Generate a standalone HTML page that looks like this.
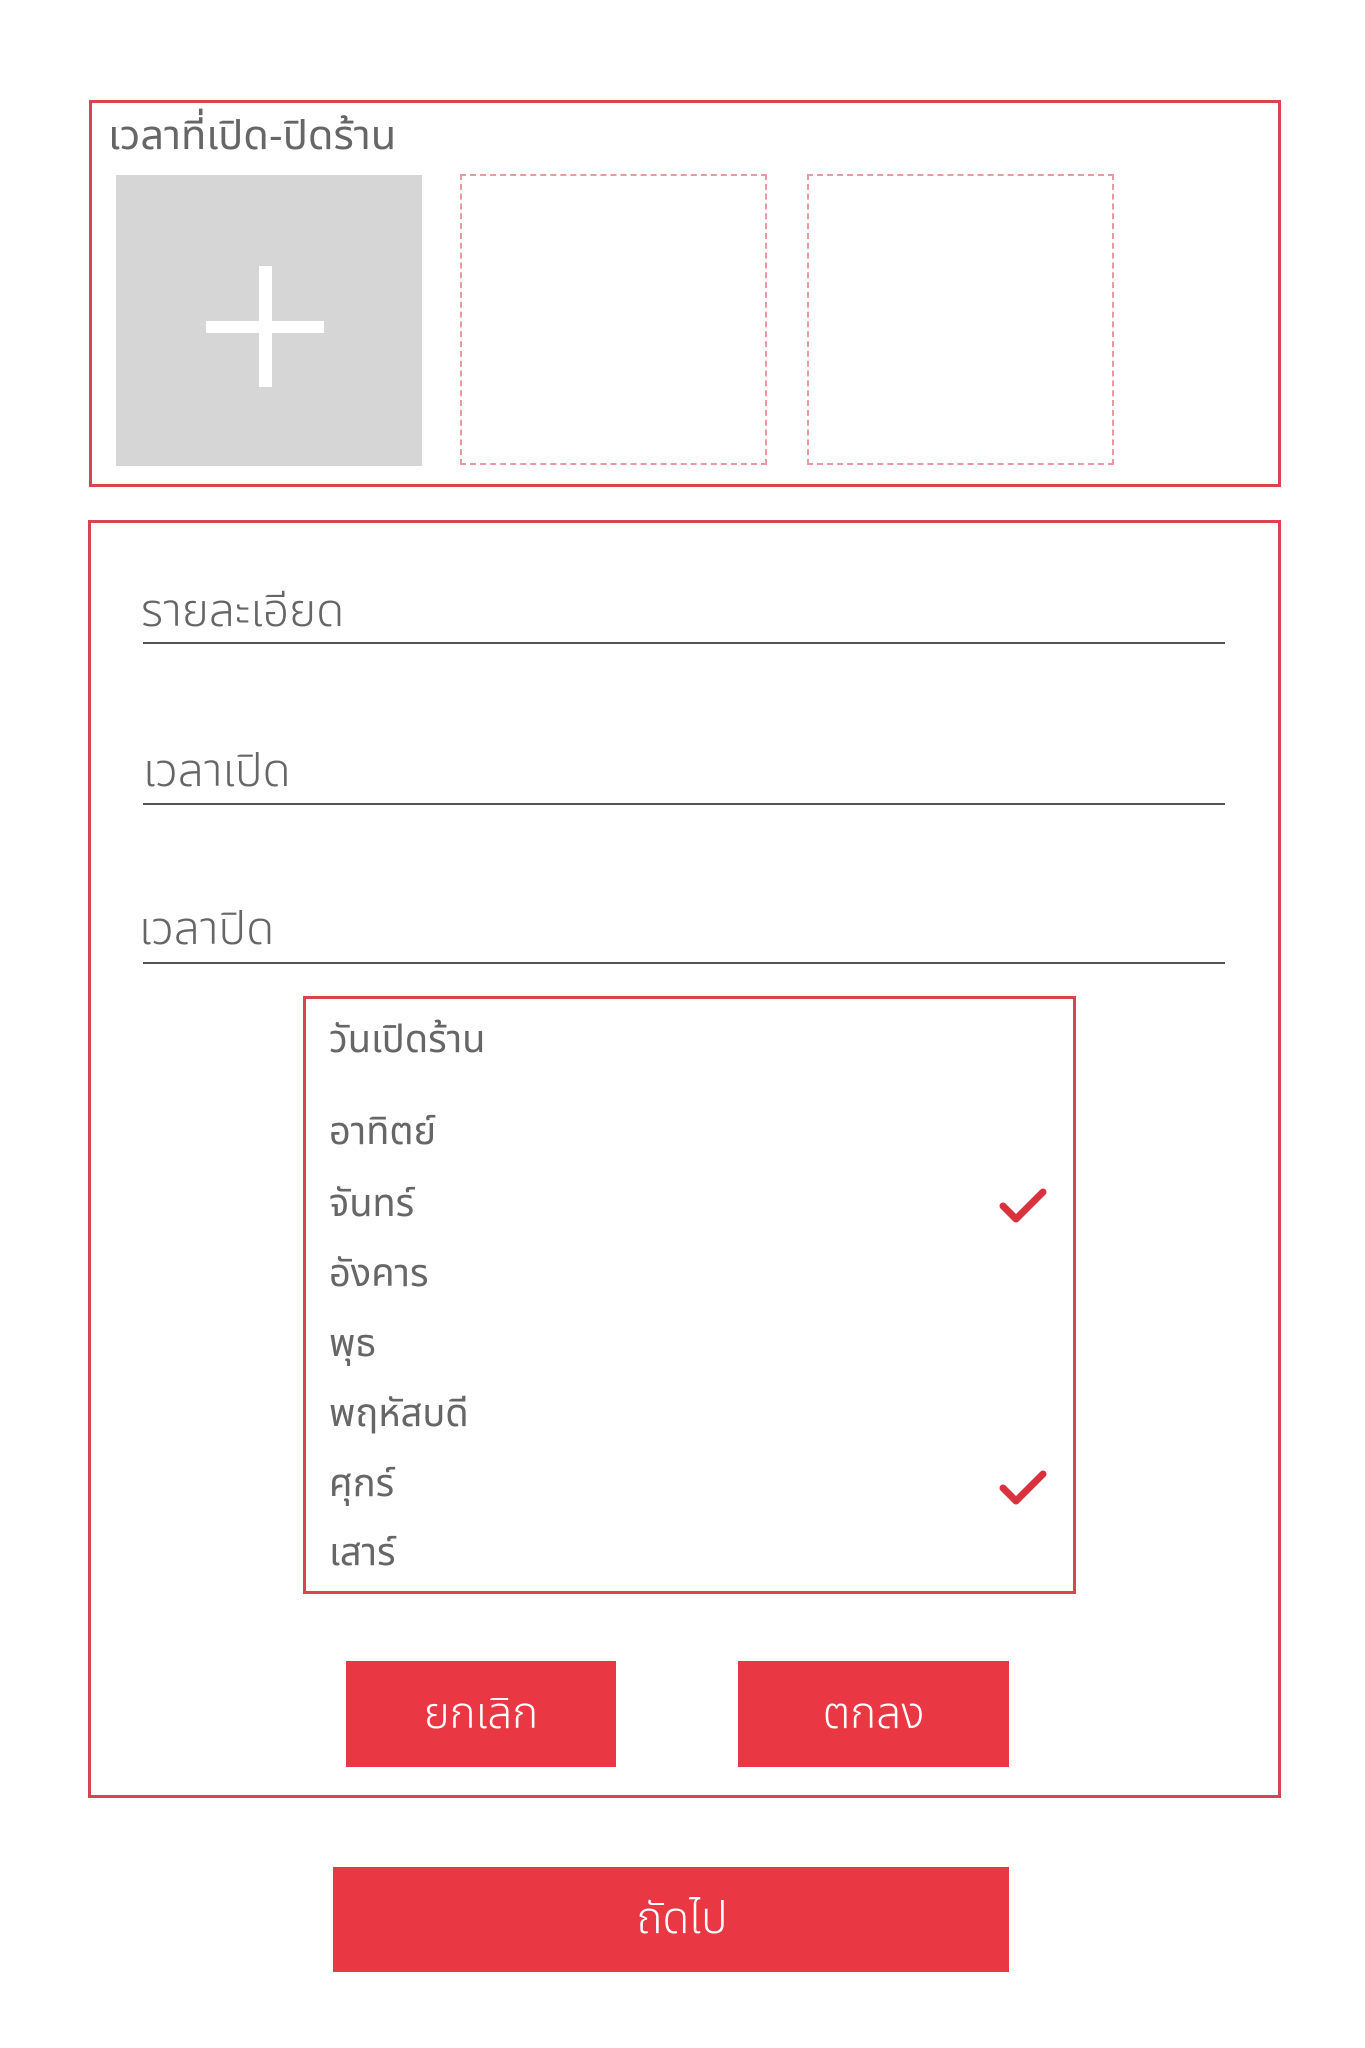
<!DOCTYPE html>
<html><head><meta charset="utf-8"><style>
*{margin:0;padding:0;box-sizing:border-box}
body{width:1365px;height:2048px;background:#fff;position:relative;font-family:"Liberation Sans","Noto Sans Thai","DejaVu Sans",sans-serif;color:#666;overflow:hidden}
.a{position:absolute}
.box{border:3px solid #d8444f}
.dash{border:2px dashed #e89aa0}
.t{position:absolute;white-space:nowrap;line-height:1}
.line{position:absolute;left:143px;width:1082px;height:2px;background:#555}
.btn{position:absolute;background:#e93843;color:#fff;font-size:44px;font-weight:300;display:flex;align-items:center;justify-content:center}
.item{position:absolute;left:329px;font-size:38px;color:#666;line-height:1;transform:translateY(-50%)}
</style></head><body>
<div class="a box" style="left:89px;top:100px;width:1192px;height:387px"></div>
<div class="t" style="left:108px;top:116px;font-size:40px;color:#666;transform:scaleX(1.04);transform-origin:left">เวลาที่เปิด-ปิดร้าน</div>
<div class="a" style="left:116px;top:175px;width:306px;height:291px;background:#d6d6d6"></div>
<div class="a" style="left:206px;top:321px;width:118px;height:12px;background:#fff"></div>
<div class="a" style="left:259px;top:266px;width:13px;height:121px;background:#fff"></div>
<div class="a dash" style="left:460px;top:174px;width:307px;height:291px"></div>
<div class="a dash" style="left:807px;top:174px;width:307px;height:291px"></div>

<div class="a box" style="left:88px;top:520px;width:1193px;height:1278px"></div>
<div class="t" style="left:141px;top:587px;font-size:46px;font-weight:300;color:#666">รายละเอียด</div>
<div class="line" style="top:642px"></div>
<div class="t" style="left:143px;top:747px;font-size:46px;font-weight:300;color:#666">เวลาเปิด</div>
<div class="line" style="top:803px"></div>
<div class="t" style="left:139px;top:905px;font-size:46px;font-weight:300;color:#666">เวลาปิด</div>
<div class="line" style="top:962px"></div>

<div class="a box" style="left:303px;top:996px;width:773px;height:598px"></div>
<div class="item" style="top:1040px">วันเปิดร้าน</div>
<div class="item" style="top:1132px">อาทิตย์</div>
<div class="item" style="top:1204px">จันทร์</div>
<div class="item" style="top:1274px">อังคาร</div>
<div class="item" style="top:1344px">พุธ</div>
<div class="item" style="top:1414px">พฤหัสบดี</div>
<div class="item" style="top:1484px">ศุกร์</div>
<div class="item" style="top:1553px">เสาร์</div>
<svg class="a" style="left:999px;top:1186px" width="48" height="40" viewBox="0 0 48 40"><path d="M4 20 L17 33 L44 6" fill="none" stroke="#d8323f" stroke-width="7" stroke-linecap="round" stroke-linejoin="round"/></svg>
<svg class="a" style="left:999px;top:1468px" width="48" height="40" viewBox="0 0 48 40"><path d="M4 20 L17 33 L44 6" fill="none" stroke="#d8323f" stroke-width="7" stroke-linecap="round" stroke-linejoin="round"/></svg>

<div class="btn" style="left:346px;top:1661px;width:270px;height:106px">ยกเลิก</div>
<div class="btn" style="left:738px;top:1661px;width:271px;height:106px">ตกลง</div>
<div class="btn" style="left:333px;top:1867px;width:676px;height:105px;padding-left:22px">ถัดไป</div>
</body></html>
